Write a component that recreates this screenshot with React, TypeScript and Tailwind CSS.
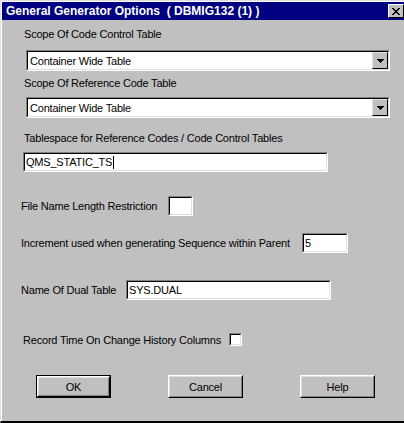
import React from 'react'

const font = { fontFamily: '"Liberation Sans", Arial, sans-serif' }

const Sunken: React.FC<{ className?: string; children?: React.ReactNode }> = ({ className = '', children }) => (
  <div className={`shrink-0 border border-t-[#808080] border-l-[#808080] border-r-white border-b-white ${className}`}>
    <div className="h-full w-full border border-t-black border-l-black border-r-[#dfdfdf] border-b-[#dfdfdf] bg-white flex items-center">
      {children}
    </div>
  </div>
)

const Combo: React.FC<{ value: string }> = ({ value }) => (
  <Sunken className="ml-[24px] w-[364px] h-[21px]">
    <span className="flex-1 pl-[2px]">{value}</span>
    <div className="w-[16px] h-[17px] bg-[#c0c0c0] border border-t-[#dfdfdf] border-l-[#dfdfdf] border-r-black border-b-black flex items-center justify-center">
      <svg width="7" height="4" viewBox="0 0 7 4">
        <path d="M0 0h7v1H0zM1 1h5v1H1zM2 2h3v1H2zM3 3h1v1H3z" fill="#000" />
      </svg>
    </div>
  </Sunken>
)

const Button: React.FC<{ label: string; def?: boolean }> = ({ label, def }) => (
  <div className={`w-[75px] h-[23px] ${def ? 'border border-black' : ''}`}>
    <div className="h-full w-full border border-t-white border-l-white border-r-black border-b-black">
      <div className="h-full w-full border border-t-[#dfdfdf] border-l-[#dfdfdf] border-r-[#808080] border-b-[#808080] flex items-center justify-center bg-[#c0c0c0]">
        {label}
      </div>
    </div>
  </div>
)

export default function App() {
  return (
    <div style={font} className="w-[404px] h-[423px] bg-[#c0c0c0] overflow-hidden border-t border-l border-t-[#dfdfdf] border-l-[#dfdfdf] border-b-2 border-b-black">
      <div className="h-full border-t border-l border-white flex flex-col">
        <div className="h-[18px] bg-[#000080] flex items-center justify-between pl-[4px]">
          <span className="text-white font-bold text-[12px] leading-[14px] whitespace-pre">
            {'General Generator Options  ( DBMIG132 (1) )'}
          </span>
          <div className="w-[16px] h-[14px] bg-[#c0c0c0] border border-t-white border-l-white border-r-black border-b-black flex items-center justify-center">
            <svg width="8" height="7" viewBox="0 0 8 7">
              <path d="M0 0h2v1H0zM6 0h2v1H6zM1 1h2v1H1zM5 1h2v1H5zM2 2h4v1H2zM3 3h2v1H3zM2 4h4v1H2zM1 5h2v1H1zM5 5h2v1H5zM0 6h2v1H0zM6 6h2v1H6z" fill="#000" />
            </svg>
          </div>
        </div>

        <div className="flex flex-col text-[11px] leading-[14px] tracking-[-0.2px] text-black whitespace-nowrap">
          <div className="mt-[7px] ml-[22px]">Scope Of Code Control Table</div>
          <div className="mt-[9px]">
            <Combo value="Container Wide Table" />
          </div>
          <div className="mt-[5px] ml-[22px]">Scope Of Reference Code Table</div>
          <div className="mt-[7px]">
            <Combo value="Container Wide Table" />
          </div>
          <div className="mt-[13px] ml-[22px]">Tablespace for Reference Codes / Code Control Tables</div>
          <Sunken className="mt-[7px] ml-[21px] w-[305px] h-[20px]">
            <span className="pl-[1px]">QMS_STATIC_TS</span>
            <span className="w-px h-[13px] bg-black ml-px" />
          </Sunken>

          <div className="mt-[24px] h-[20px] flex items-center">
            <span className="ml-[19px] w-[147px] shrink-0">File Name Length Restriction</span>
            <Sunken className="w-[25px] h-[20px]" />
          </div>

          <div className="mt-[17px] h-[20px] flex items-center">
            <span className="ml-[19px] w-[281px] shrink-0">Increment used when generating Sequence within Parent</span>
            <Sunken className="w-[46px] h-[20px]">
              <span className="pl-[1px]">5</span>
            </Sunken>
          </div>

          <div className="mt-[27px] h-[20px] flex items-center">
            <span className="ml-[19px] w-[105px] shrink-0">Name Of Dual Table</span>
            <Sunken className="w-[205px] h-[20px]">
              <span className="pl-[1px]">SYS.DUAL</span>
            </Sunken>
          </div>

          <div className="mt-[33px] h-[13px] flex items-center">
            <span className="ml-[21px] w-[206px] shrink-0">Record Time On Change History Columns</span>
            <Sunken className="w-[13px] h-[13px]" />
          </div>

          <div className="mt-[29px] flex">
            <div className="ml-[34px]">
              <Button label="OK" def />
            </div>
            <div className="ml-[57px]">
              <Button label="Cancel" />
            </div>
            <div className="ml-[57px]">
              <Button label="Help" />
            </div>
          </div>
        </div>
      </div>
    </div>
  )
}
